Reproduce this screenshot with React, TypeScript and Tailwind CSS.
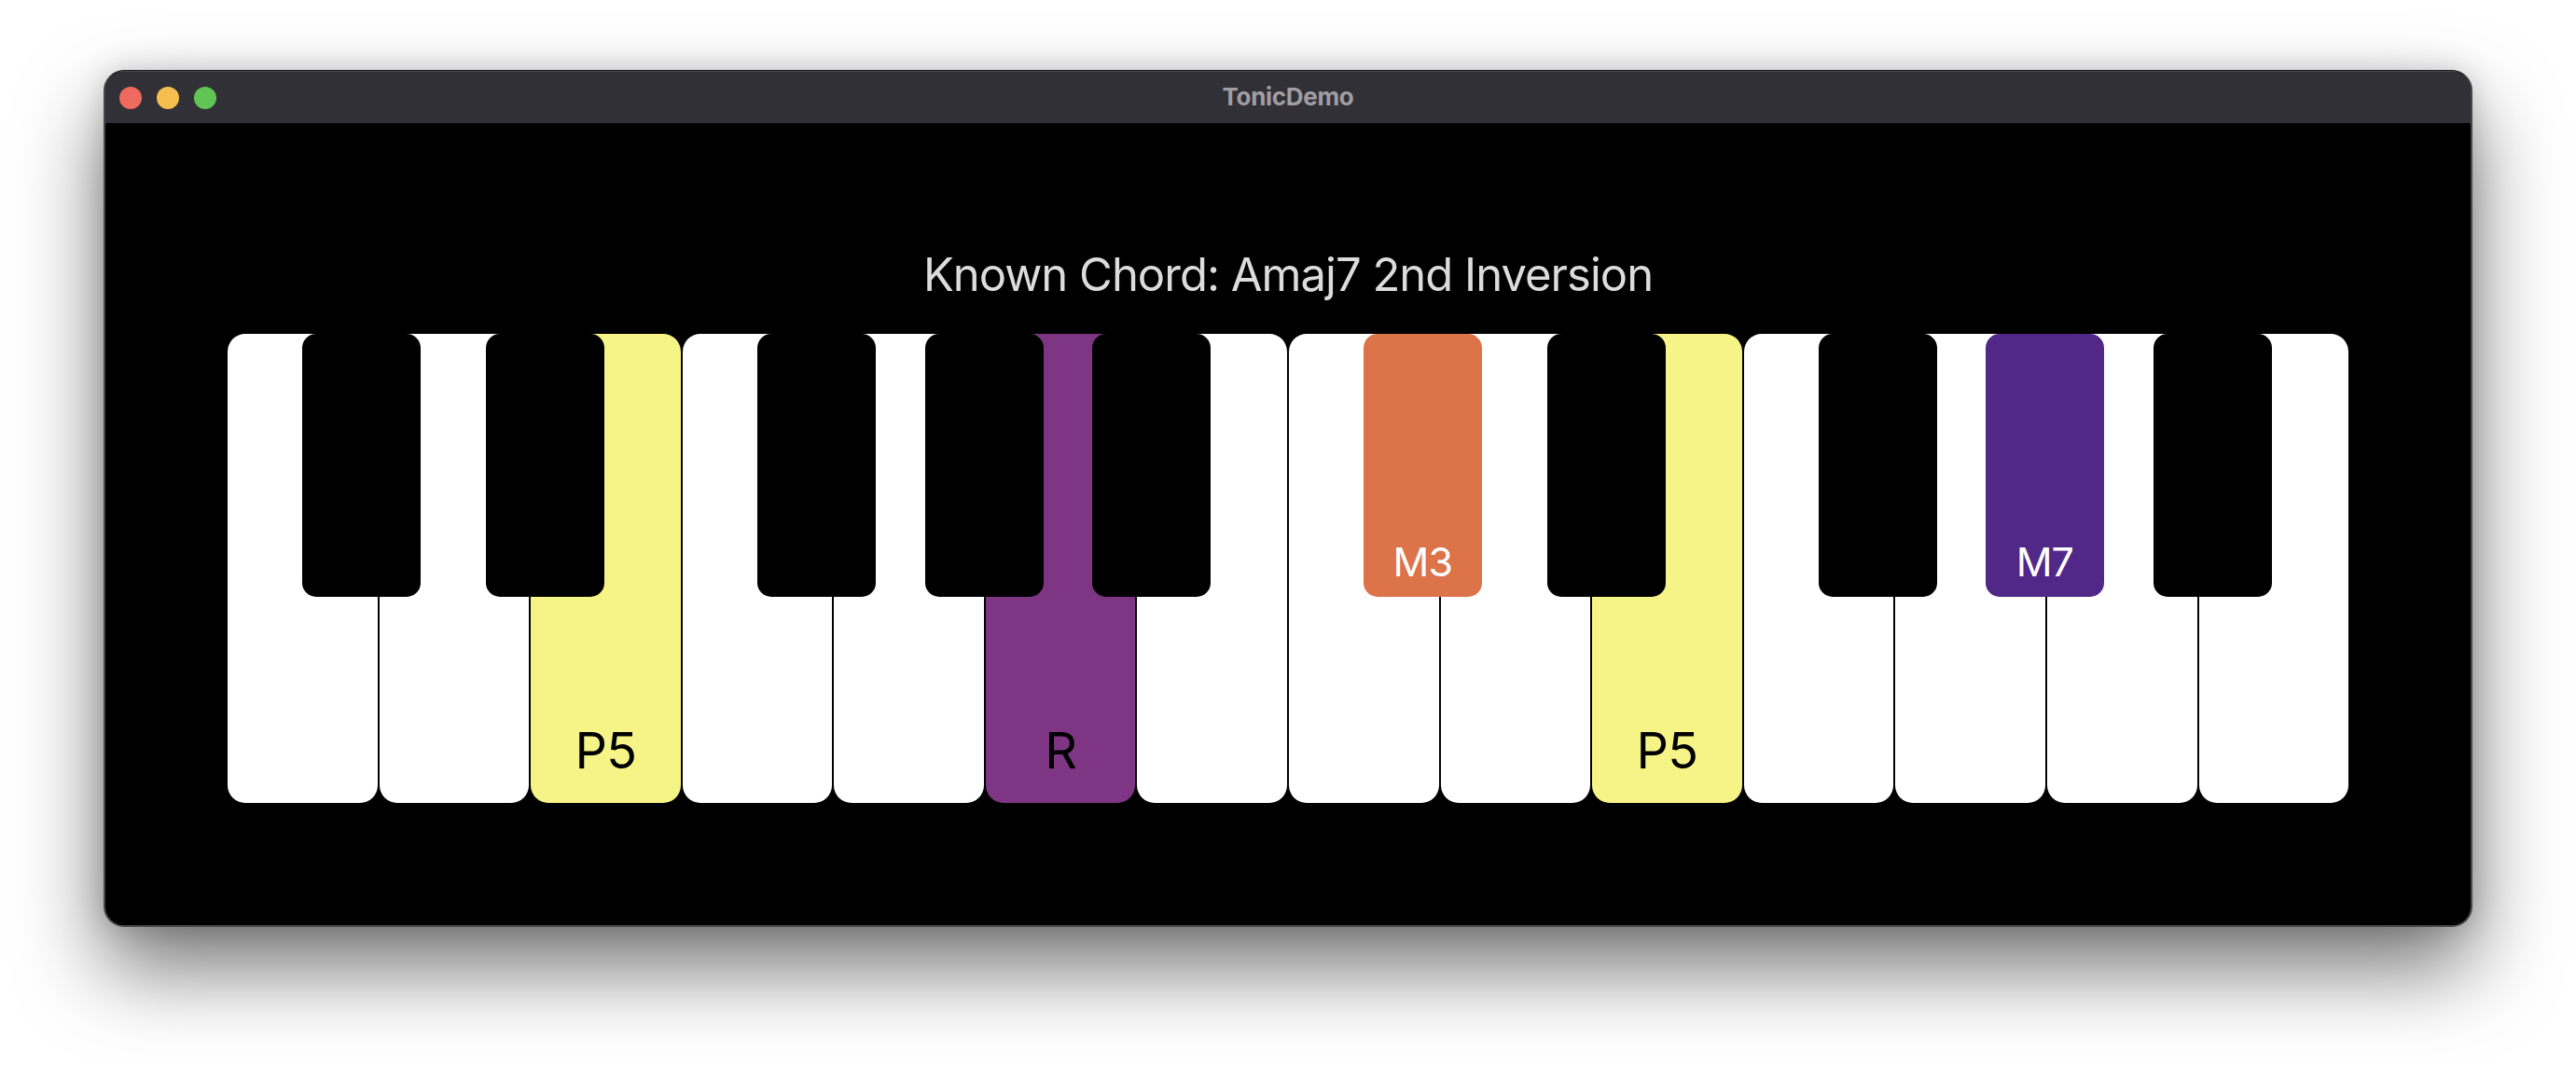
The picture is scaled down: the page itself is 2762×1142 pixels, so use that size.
const whiteKeys = [
  { id: 'c3' },
  { id: 'd3' },
  { id: 'e3', label: 'P5', color: 'bg-[#f6f486]', text: 'text-black' },
  { id: 'f3' },
  { id: 'g3' },
  { id: 'a3', label: 'R', color: 'bg-[#7e3583]', text: 'text-black' },
  { id: 'b3' },
  { id: 'c4' },
  { id: 'd4' },
  { id: 'e4', label: 'P5', color: 'bg-[#f6f486]', text: 'text-black' },
  { id: 'f4' },
  { id: 'g4' },
  { id: 'a4' },
  { id: 'b4' },
];

const blackKeys = [
  { id: 'cs3', pos: 'left-[80px]' },
  { id: 'ds3', pos: 'left-[277px]' },
  { id: 'fs3', pos: 'left-[568px]' },
  { id: 'gs3', pos: 'left-[748px]' },
  { id: 'as3', pos: 'left-[927px]' },
  { id: 'cs4', pos: 'left-[1218px]', label: 'M3', color: 'bg-[#dc7349]' },
  { id: 'ds4', pos: 'left-[1415px]' },
  { id: 'fs4', pos: 'left-[1706px]' },
  { id: 'gs4', pos: 'left-[1885px]', label: 'M7', color: 'bg-[#512888]' },
  { id: 'as4', pos: 'left-[2065px]' },
];

function TrafficLights() {
  return (
    <div className="absolute left-[15px] top-[16px] flex gap-4">
      <div className="w-6 h-6 rounded-full bg-[#ee6a5f]" />
      <div className="w-6 h-6 rounded-full bg-[#f5be4f]" />
      <div className="w-6 h-6 rounded-full bg-[#61c454]" />
    </div>
  );
}

function Keyboard() {
  return (
    <div className="relative flex gap-[2px] w-[2274px] h-[503px]">
      {whiteKeys.map((key) => (
        <div
          key={key.id}
          className={`flex-1 flex items-end justify-center pb-[24px] rounded-[19px] ${key.color ?? 'bg-white'} ${key.text ?? ''}`}
        >
          {key.label && <span className="text-[54px] leading-[64px] tracking-[-0.75px]">{key.label}</span>}
        </div>
      ))}
      {blackKeys.map((key) => (
        <div
          key={key.id}
          className={`absolute top-0 ${key.pos} w-[126.5px] h-[282px] flex items-end justify-center pb-[12px] rounded-[15px] text-white ${key.color ?? 'bg-black'}`}
        >
          {key.label && <span className="text-[43px] leading-[52px] tracking-[-1px]">{key.label}</span>}
        </div>
      ))}
    </div>
  );
}

export default function App() {
  return (
    <div className="h-screen bg-white pl-[111px] pt-[75px] overflow-hidden font-['Inter',sans-serif]">
      <div className="w-[2540px] h-[919px] rounded-[22px] border-2 border-t border-[#474747] border-t-[#1c1c1c] bg-black overflow-hidden shadow-[0_44px_90px_rgba(0,0,0,0.55),0_0_30px_rgba(0,0,0,0.16)] flex flex-col">
        <div className="relative h-[56px] shrink-0 border-t border-[#4b494f] bg-[#323037] flex items-center justify-center">
          <TrafficLights />
          <span className="text-[26px] font-bold tracking-[-0.3px] text-[#a09ea4] -translate-y-[1px]">TonicDemo</span>
        </div>
        <div className="flex-1 flex flex-col items-center">
          <h1 className="mt-[134px] mb-[34px] text-[49px] leading-[58px] font-normal tracking-[-1px] text-[#dcdcdc]">
            Known Chord: Amaj7 2nd Inversion
          </h1>
          <Keyboard />
        </div>
      </div>
    </div>
  );
}
